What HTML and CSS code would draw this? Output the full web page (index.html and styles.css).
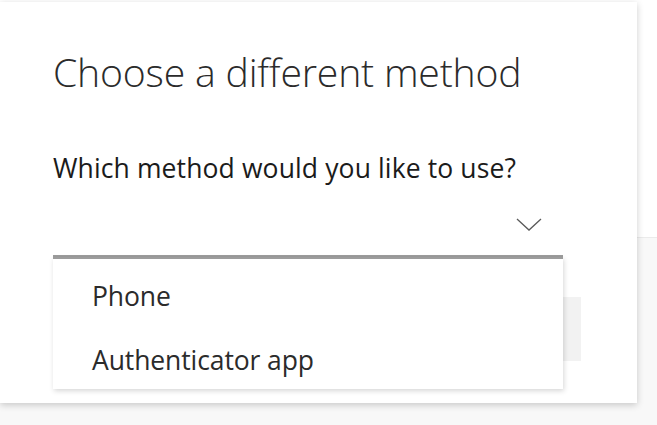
FILE: index.html
```html
<!DOCTYPE html>
<html lang="en">
<head>
<meta charset="utf-8">
<title>Choose a different method</title>
<link rel="stylesheet" href="styles.css">
</head>
<body>
  <div class="card">
    <h1 class="title">Choose a different method</h1>
    <div class="label">Which method would you like to use?</div>
    <div class="select">
      <svg class="chevron" width="26" height="13" viewBox="0 0 26 13" aria-hidden="true">
        <polyline points="1,1 13,12 25,1" fill="none" stroke="#5a5a5a" stroke-width="1.3"/>
      </svg>
    </div>
    <div class="button-row"></div>
    <ul class="dropdown">
      <li class="option">Phone</li>
      <li class="option">Authenticator app</li>
    </ul>
  </div>
</body>
</html>
```

FILE: styles.css
```css
html, body {
  margin: 0;
  padding: 0;
}

body {
  width: 657px;
  height: 425px;
  overflow: hidden;
  font-family: "Segoe UI", "Open Sans", "Noto Sans", sans-serif;
  color: #1b1b1b;
  background: linear-gradient(to bottom, #ffffff 0, #ffffff 237px, #ebebeb 237px, #ebebeb 238px, #f8f8f8 238px);
}

.card {
  position: relative;
  box-sizing: border-box;
  width: 637px;
  height: 401px;
  margin-top: 2px;
  padding: 46px 0 0 53px;
  background: #ffffff;
  box-shadow: 0 2px 7px rgba(0, 0, 0, 0.2);
}

.title {
  margin: 0;
  font-size: 39.2px;
  line-height: 48px;
  font-weight: 300;
  color: #2b2b2b;
  letter-spacing: -0.2px;
}

.label {
  margin-top: 56px;
  font-size: 26.5px;
  line-height: 32px;
  font-weight: 400;
  color: #1b1b1b;
  letter-spacing: 0.12px;
}

.select {
  box-sizing: border-box;
  width: 510px;
  height: 63px;
  margin-top: 10px;
  border-bottom: 2px solid #9c9c9c;
  display: flex;
  align-items: center;
  justify-content: flex-end;
  padding-right: 21px;
}

.chevron {
  display: block;
}

.button-row {
  width: 528px;
  height: 64px;
  margin-top: 40px;
  background: #f2f2f2;
}

.dropdown {
  position: absolute;
  top: 255px;
  left: 53px;
  box-sizing: border-box;
  width: 510px;
  height: 132px;
  margin: 0;
  padding: 5px 0 0 0;
  list-style: none;
  background: #ffffff;
  box-shadow: 1px 2px 5px rgba(0, 0, 0, 0.16);
  border-top: 2px solid #9c9c9c;
  overflow: hidden;
}

.option {
  padding-left: 39px;
  font-size: 26.5px;
  line-height: 64px;
  color: #2b2b2b;
  letter-spacing: -0.1px;
}
```
